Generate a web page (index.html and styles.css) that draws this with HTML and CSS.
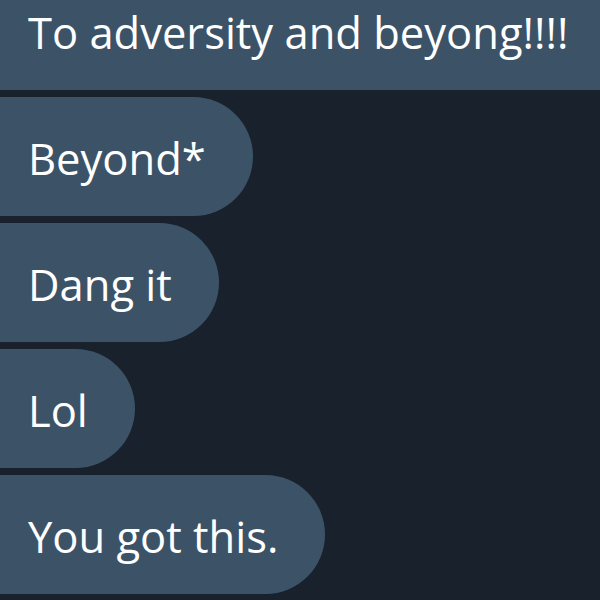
FILE: index.html
```html
<!DOCTYPE html>
<html lang="en">
<head>
  <meta charset="UTF-8" />
  <title>Chat</title>
  <link rel="stylesheet" href="styles.css">
</head>
<body>
  <div class="thread">
    <div class="bubble wide">To adversity and beyong!!!!</div>
    <div class="bubble">Beyond*</div>
    <div class="bubble">Dang it</div>
    <div class="bubble">Lol</div>
    <div class="bubble">You got this.</div>
  </div>
</body>
</html>
```

FILE: styles.css
```css
* {
  margin: 0;
  padding: 0;
  box-sizing: border-box;
}

html, body {
  height: 100%;
  overflow: hidden;
}

body {
  background: #19212c;
  font-family: 'Open Sans', 'Noto Sans', sans-serif;
  color: #fff;
}

.thread {
  display: flex;
  flex-direction: column;
  align-items: flex-start;
  gap: 7px;
  margin-top: -29px;
}

.bubble {
  display: flex;
  align-items: center;
  height: 119px;
  padding: 4px 47px 0 28px;
  background: #3c5367;
  border-radius: 0 60px 60px 0;
  font-size: 43.5px;
  white-space: nowrap;
}

.wide {
  align-self: stretch;
  border-radius: 0;
}
```
